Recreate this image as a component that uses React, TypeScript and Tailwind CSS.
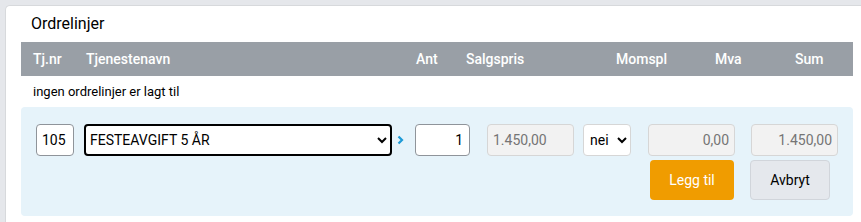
import React from 'react';

const cols = [
    { label: 'Tj.nr', w: 'w-[53px]' },
    { label: 'Tjenestenavn', w: 'w-[330px]' },
    { label: 'Ant', w: 'w-[50px]' },
    { label: 'Salgspris', w: 'w-[150px]' },
    { label: 'Momspl', w: 'w-[99px]' },
    { label: 'Mva', w: 'w-[80px]' },
    { label: 'Sum', w: 'w-[50px]' },
];

export default function App() {
    return (
        <div className="min-h-screen bg-[#e5e7eb] pt-[5px] pl-[5px] font-['Roboto',sans-serif] text-[14px] text-black">
            <div className="bg-white rounded-tl-[5px] border-l border-t border-[#d7d9dc] pl-[15px] pr-[8px] pt-[8px] h-[217px]">
                <h2 className="text-[16px] leading-[20px] pl-[10px] mb-[8px]">Ordrelinjer</h2>

                {/* table header */}
                <div className="flex items-center h-[34px] bg-[#999fa6] pl-[12px] text-white font-medium text-[14px]">
                    {cols.map((c) => (
                        <div key={c.label} className={c.w}>{c.label}</div>
                    ))}
                </div>

                <div className="h-[31px] flex items-center pl-[12px] text-[13px]">ingen ordrelinjer er lagt til</div>

                {/* new line form */}
                <div className="bg-[#e6f3fa] rounded-[4px] pt-[17px] pb-[16px] pl-[15px]">
                    <div className="flex items-center">
                        <input
                            defaultValue="105"
                            className="w-[38px] h-[32px] rounded-[4px] border border-[#8f949a] bg-white px-[5px] text-[14px] outline-none"
                        />
                        <select
                            defaultValue="festeavgift"
                            className="ml-[10px] w-[308px] h-[32px] rounded-[4px] border-2 border-black bg-white pl-0 pr-[4px] text-[14px] outline-none"
                        >
                            <option value="festeavgift">FESTEAVGIFT 5 ÅR</option>
                        </select>
                        <svg width="7" height="10" viewBox="0 0 7 10" className="ml-[5px]">
                            <path d="M1.5 1.5 L5 5 L1.5 8.5" fill="none" stroke="#1d9ad6" strokeWidth="2.2" />
                        </svg>
                        <input
                            defaultValue="1"
                            className="ml-[11px] w-[55px] h-[32px] rounded-[4px] border border-[#8f949a] bg-white px-[6px] text-right text-[14px] outline-none"
                        />
                        <input
                            disabled
                            value="1.450,00"
                            className="ml-[17px] w-[87px] h-[32px] rounded-[4px] border border-[#d6d6d6] bg-[#f2f2f2] px-[5px] text-[14px] text-[#757575]"
                        />
                        <select
                            defaultValue="nei"
                            className="ml-[9px] w-[48px] h-[32px] rounded-[4px] border border-[#d6d6d6] bg-white pl-[2px] text-[14px] outline-none"
                        >
                            <option value="nei">nei</option>
                            <option value="ja">ja</option>
                        </select>
                        <input
                            disabled
                            value="0,00"
                            className="ml-[17px] w-[87px] h-[32px] rounded-[4px] border border-[#d6d6d6] bg-[#f2f2f2] px-[5px] text-right text-[14px] text-[#757575]"
                        />
                        <input
                            disabled
                            value="1.450,00"
                            className="ml-[16px] w-[87px] h-[32px] rounded-[4px] border border-[#d6d6d6] bg-[#f2f2f2] px-[5px] text-right text-[14px] text-[#757575]"
                        />
                    </div>
                    <div className="flex mt-[4px] pl-[614px]">
                        <button className="w-[84px] h-[40px] rounded-[4px] bg-[#f09c00] text-white text-[14px]">Legg til</button>
                        <button className="ml-[16px] w-[80px] h-[40px] rounded-[4px] border border-[#d1d5db] bg-[#e5e8ed] text-black text-[14px]">Avbryt</button>
                    </div>
                </div>
            </div>
        </div>
    );
}
